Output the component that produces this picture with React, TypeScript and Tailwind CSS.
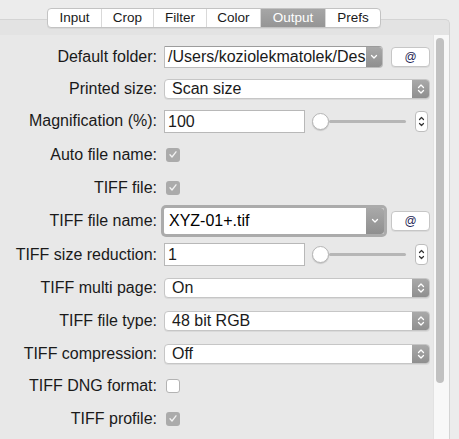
import React from 'react';

const font = { fontFamily: '"Liberation Sans", Arial, sans-serif' };

const tabs = [
  { name: 'Input', w: 'w-[53px]' },
  { name: 'Crop', w: 'w-[52px]' },
  { name: 'Filter', w: 'w-[53px]' },
  { name: 'Color', w: 'w-[54px]' },
  { name: 'Output', w: 'w-[65px]' },
  { name: 'Prefs', w: 'w-[55px]' },
];

const UpDown = () => (
  <svg width="8" height="12" viewBox="0 0 8 12" fill="none" stroke="white" strokeWidth="1.3" strokeLinecap="round" strokeLinejoin="round">
    <path d="M1.5 4.5 L4 2 L6.5 4.5" />
    <path d="M1.5 7.5 L4 10 L6.5 7.5" />
  </svg>
);

const Down = () => (
  <svg width="8" height="6" viewBox="0 0 8 6" fill="none" stroke="white" strokeWidth="1.3" strokeLinecap="round" strokeLinejoin="round">
    <path d="M1.5 1.5 L4 4 L6.5 1.5" />
  </svg>
);

const Row = ({ h, label, children }: { h: string; label: string; children: React.ReactNode }) => (
  <div className={`flex items-center ${h}`}>
    <div className="w-[157px] shrink-0 text-right text-[16px] text-[#1a1a1a] whitespace-nowrap">{label}</div>
    <div className="ml-[7px] flex items-center">{children}</div>
  </div>
);

const Popup = ({ value }: { value: string }) => (
  <div className="flex h-[20px] w-[266px] overflow-hidden rounded-[4px] border border-[#c6c6c6] bg-white shadow-[0_1px_0_rgba(0,0,0,0.06)]">
    <div className="flex-1 pl-[7px] text-[16px] leading-[18px] text-[#1a1a1a]">{value}</div>
    <div className="flex w-[17px] items-center justify-center bg-linear-to-b from-[#a9a9a9] to-[#8f8f8f]">
      <UpDown />
    </div>
  </div>
);

const AtButton = () => (
  <div className="ml-[8px] flex h-[20px] w-[39px] items-center justify-center rounded-[4px] border border-[#c6c6c6] bg-white text-[12px] text-[#1f1f55] shadow-[0_1px_0_rgba(0,0,0,0.06)]">
    @
  </div>
);

const NumberSlider = ({ value }: { value: string }) => (
  <>
    <div className="h-[23px] w-[141px] border border-[#b8b8b8] bg-white pl-[3px] text-[16px] leading-[21px] text-[#1a1a1a]">{value}</div>
    <div className="ml-[7px] h-[17px] w-[17px] rounded-full border border-[#b5b5b5] bg-white shadow-[0_1px_1px_rgba(0,0,0,0.15)]" />
    <div className="h-[3px] w-[77px] rounded-full bg-[#b6b6b6]" />
    <div className="ml-[9px] flex h-[21px] w-[13px] flex-col items-center justify-center gap-[1px] rounded-[4px] border border-[#bdbdbd] bg-white">
      <svg width="7" height="5" viewBox="0 0 7 5" fill="none" stroke="#333" strokeWidth="1.2" strokeLinecap="round" strokeLinejoin="round">
        <path d="M1.5 3.5 L3.5 1.5 L5.5 3.5" />
      </svg>
      <svg width="7" height="5" viewBox="0 0 7 5" fill="none" stroke="#333" strokeWidth="1.2" strokeLinecap="round" strokeLinejoin="round">
        <path d="M1.5 1.5 L3.5 3.5 L5.5 1.5" />
      </svg>
    </div>
  </>
);

const Check = ({ on }: { on: boolean }) =>
  on ? (
    <div className="ml-[2px] flex h-[14px] w-[14px] items-center justify-center rounded-[3px] bg-[#ababab]">
      <svg width="10" height="9" viewBox="0 0 10 9" fill="none" stroke="#f2f2f2" strokeWidth="1.3" strokeLinecap="round" strokeLinejoin="round">
        <path d="M2 4.8 L4 7 L8 1.8" />
      </svg>
    </div>
  ) : (
    <div className="ml-[2px] h-[14px] w-[14px] rounded-[3px] border border-[#b3b3b3] bg-white" />
  );

export default function App() {
  return (
    <div className="h-[439px] w-[459px] overflow-hidden bg-[#ececec] pt-[8px]" style={font}>
      {/* tabs */}
      <div className="relative z-10 ml-[47px] flex h-[20px] w-fit overflow-hidden rounded-[4px] border border-[#c3c3c3] bg-white shadow-[0_1px_0_rgba(0,0,0,0.05)]">
        {tabs.map((t, i) => (
          <div
            key={t.name}
            className={`${t.w} flex items-center justify-center text-[13.5px] leading-none ${i > 0 ? 'border-l border-[#d9d9d9]' : ''} ${
              t.name === 'Output' ? 'bg-linear-to-b from-[#a6a6a6] to-[#959595] text-white' : 'text-[#1a1a1a]'
            }`}
          >
            {t.name}
          </div>
        ))}
      </div>

      {/* tab box */}
      <div className="-mt-[9px] h-[420px] w-[450px] rounded-tr-[5px] border-t border-r border-[#d4d4d4] bg-[#e3e3e3] pt-[15px]">
        <div className="flex h-[404px]">
          <div className="w-[433px] bg-[#e8e8e8] pt-[6px]">
            <Row h="h-[32px]" label="Default folder:">
              <div className="flex h-[22px] w-[219px] rounded-r-[4px] border border-[#bcbcbc] border-t-[#9c9c9c] bg-white">
                <div className="flex-1 overflow-hidden whitespace-nowrap pl-[3px] text-[16px] leading-[20px] text-[#1a1a1a]">
                  /Users/koziolekmatolek/Des
                </div>
                <div className="flex w-[16px] items-center justify-center rounded-r-[3px] bg-linear-to-b from-[#a9a9a9] to-[#8f8f8f]">
                  <Down />
                </div>
              </div>
              <AtButton />
            </Row>
            <Row h="h-[31px]" label="Printed size:">
              <Popup value="Scan size" />
            </Row>
            <Row h="h-[34px]" label="Magnification (%):">
              <NumberSlider value="100" />
            </Row>
            <Row h="h-[33px]" label="Auto file name:">
              <Check on />
            </Row>
            <Row h="h-[33px]" label="TIFF file:">
              <Check on />
            </Row>
            <Row h="h-[34px]" label="TIFF file name:">
              <div className="-ml-[3px] h-[32px] w-[226px] rounded-[5px] bg-[#ababab] p-[3px]">
                <div className="flex h-full rounded-[2px] bg-white">
                  <div className="flex-1 pl-[5px] text-[16px] leading-[26px] text-black">XYZ-01+.tif</div>
                  <div className="flex w-[18px] items-center justify-center rounded-r-[3px] bg-linear-to-b from-[#a9a9a9] to-[#8f8f8f]">
                    <Down />
                  </div>
                </div>
              </div>
              <div className="-ml-[4px]">
                <AtButton />
              </div>
            </Row>
            <Row h="h-[33px]" label="TIFF size reduction:">
              <NumberSlider value="1" />
            </Row>
            <Row h="h-[33px]" label="TIFF multi page:">
              <Popup value="On" />
            </Row>
            <Row h="h-[33px]" label="TIFF file type:">
              <Popup value="48 bit RGB" />
            </Row>
            <Row h="h-[33px]" label="TIFF compression:">
              <Popup value="Off" />
            </Row>
            <Row h="h-[32px]" label="TIFF DNG format:">
              <Check on={false} />
            </Row>
            <Row h="h-[33px]" label="TIFF profile:">
              <Check on />
            </Row>
          </div>

          {/* scrollbar */}
          <div className="w-[16px] border-l border-[#e2e2e2] bg-[#f8f8f8] pl-[2px] pt-[3px]">
            <div className="h-[345px] w-[8px] rounded-full bg-[#c1c1c1]" />
          </div>
        </div>
      </div>
    </div>
  );
}
